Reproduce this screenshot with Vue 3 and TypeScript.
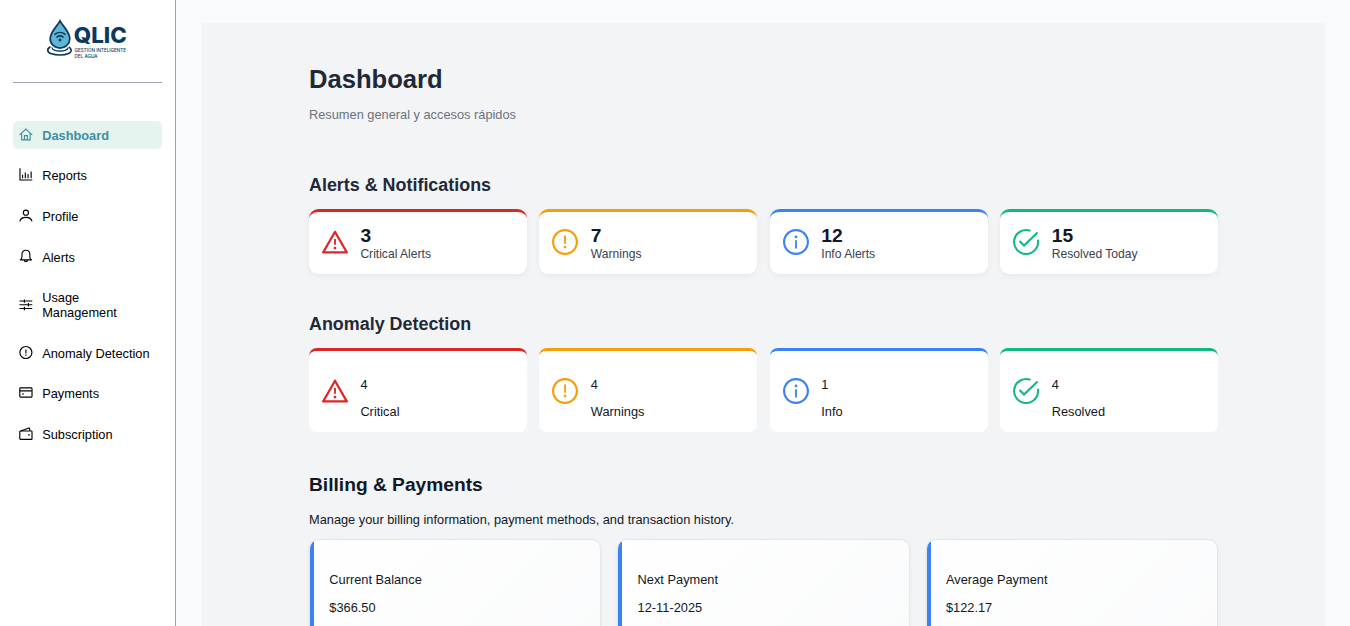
<script setup lang="ts">
interface NavItem {
  label: string
  icon: string
  active?: boolean
}

interface StatCard {
  tone: 'critical' | 'warning' | 'info' | 'resolved'
  value: number
  label: string
}

const navItems: NavItem[] = [
  { label: 'Dashboard', icon: 'home', active: true },
  { label: 'Reports', icon: 'chart' },
  { label: 'Profile', icon: 'user' },
  { label: 'Alerts', icon: 'bell' },
  { label: 'Usage Management', icon: 'sliders' },
  { label: 'Anomaly Detection', icon: 'exclamation' },
  { label: 'Payments', icon: 'card' },
  { label: 'Subscription', icon: 'wallet' },
]

const alerts: StatCard[] = [
  { tone: 'critical', value: 3, label: 'Critical Alerts' },
  { tone: 'warning', value: 7, label: 'Warnings' },
  { tone: 'info', value: 12, label: 'Info Alerts' },
  { tone: 'resolved', value: 15, label: 'Resolved Today' },
]

const anomalies: StatCard[] = [
  { tone: 'critical', value: 4, label: 'Critical' },
  { tone: 'warning', value: 4, label: 'Warnings' },
  { tone: 'info', value: 1, label: 'Info' },
  { tone: 'resolved', value: 4, label: 'Resolved' },
]

const sections = [
  { title: 'Alerts & Notifications', kind: 'alerts', cards: alerts },
  { title: 'Anomaly Detection', kind: 'anomalies', cards: anomalies },
]

const billing = [
  { label: 'Current Balance', value: '$366.50' },
  { label: 'Next Payment', value: '12-11-2025' },
  { label: 'Average Payment', value: '$122.17' },
]
</script>

<template>
  <div class="layout">
    <aside class="sidebar">
      <div class="brand">
        <svg class="logo" viewBox="0 0 84 44" width="84" height="44">
          <path d="M4.500 28.800C.4 31 1 34.300 5.500 35.800c5 1.700 12.500 1.600 17-.300 3.400-1.500 3.800-4.300.4-6.500" fill="none" stroke="#0b3a5e" stroke-width="1.700" />
          <path d="M6 29.300c-.3 2.400 3.600 3.700 8 3.700s8.300-1.200 8-3.500" fill="none" stroke="#0b3a5e" stroke-width="1.300" />
          <path d="M14 2.800C11.500 8 4.200 13.600 4.200 20.800a9.800 9.300 0 0 0 19.600 0C23.800 13.600 16.500 8 14 2.800z" fill="#5fb5d6" stroke="#0b3a5e" stroke-width="1.700" />
          <g fill="none" stroke="#0b3a5e" stroke-width="1.500" stroke-linecap="round">
            <path d="M8.900 16.300c3-2.500 7.200-2.500 10.200 0" />
            <path d="M10.900 19.100c1.900-1.500 4.300-1.500 6.200 0" />
          </g>
          <circle cx="14" cy="22" r="1.500" fill="#0b3a5e" />
          <text class="wordmark" x="27.800" y="25.200" textLength="53" lengthAdjust="spacingAndGlyphs">QLIC</text>
          <text class="tagline" x="28.500" y="33.800" textLength="51.500" lengthAdjust="spacingAndGlyphs">GESTIÓN INTELIGENTE</text>
          <text class="tagline" x="28.500" y="40.300" textLength="23" lengthAdjust="spacingAndGlyphs">DEL AGUA</text>
        </svg>
      </div>
      <nav class="nav">
        <a v-for="item in navItems" :key="item.label" class="nav-item" :class="{ active: item.active }">
          <svg class="nav-icon" viewBox="0 0 14 14">
            <template v-if="item.icon === 'home'">
              <path d="M.6 7L7 1.100l6.400 5.900M2.700 5.700v6.400h8.600V5.700M5.500 12.100V7.700h3v4.400" />
            </template>
            <template v-else-if="item.icon === 'chart'">
              <path d="M1 .3v11.900h12.500M3.600 6.900v3.600M6.400 4.500v6M9.200 6v4.500M12.300 3.500v7" />
            </template>
            <template v-else-if="item.icon === 'user'">
              <circle cx="7" cy="3.700" r="2.600" />
              <path d="M.8 12.500C1.400 9.800 4 8.500 7 8.500s5.600 1.300 6.200 4" />
            </template>
            <template v-else-if="item.icon === 'bell'">
              <path d="M.9 11h12.200M1.500 10.800c1-.7 1.500-1.500 1.500-2.700V5.600C3 3 4.600 1.300 7 1.300s4 1.700 4 4.300v2.500c0 1.200.5 2 1.500 2.700M5.200 11.400c.2 1 1 1.500 1.800 1.500s1.600-.5 1.800-1.500" />
            </template>
            <template v-else-if="item.icon === 'sliders'">
              <path d="M.5 3.100h13M.5 6.900h13M.5 10.700h13M5.500 1.400v3.300M9.500 5.200v3.400M5.500 9v3.400" />
            </template>
            <template v-else-if="item.icon === 'exclamation'">
              <circle cx="7" cy="6.600" r="6.100" />
              <path d="M7 3.500v4M7 8.600v1.200" />
            </template>
            <template v-else-if="item.icon === 'card'">
              <rect x=".8" y="1.900" width="12.400" height="9.400" rx=".8" />
              <path d="M1 4.900h12M3 8.100h2" />
            </template>
            <template v-else>
              <rect x=".8" y="4" width="12.400" height="8.600" rx=".8" />
              <path d="M1.500 4l8.800-3 1 2.800M9.300 8h1.600" />
            </template>
          </svg>
          <span>{{ item.label }}</span>
        </a>
      </nav>
    </aside>

    <main class="main">
      <div class="panel">
        <header class="page-header">
          <h1>Dashboard</h1>
          <p>Resumen general y accesos rápidos</p>
        </header>

        <section v-for="section in sections" :key="section.kind" :class="section.kind">
          <h2>{{ section.title }}</h2>
          <div class="stat-grid">
            <article v-for="card in section.cards" :key="card.tone" class="stat" :class="card.tone">
              <svg v-if="card.tone === 'resolved'" class="stat-icon" viewBox="0 0 26 26">
                <g fill="none" stroke="currentColor" stroke-width="2.100">
                  <path d="M17.600 1.900A12 12 0 1 0 24.900 10.800" />
                  <path d="M6.500 11.900l4.500 4.700L24.600 3.400" />
                </g>
              </svg>
              <svg v-else class="stat-icon" viewBox="64 64 896 896" fill="currentColor">
                <path v-if="card.tone === 'critical'" d="M464 720a48 48 0 1 0 96 0 48 48 0 1 0-96 0zm16-304v184c0 4.400 3.600 8 8 8h48c4.400 0 8-3.600 8-8V416c0-4.400-3.600-8-8-8h-48c-4.400 0-8 3.600-8 8zm475.700 440l-416-720c-6.200-10.700-16.900-16-27.700-16s-21.600 5.300-27.700 16l-416 720C56 877.400 71.400 904 96 904h832c24.600 0 40-26.600 27.700-48zm-783.500-27.900L512 239.900l339.800 588.200H172.200z" />
                <template v-else>
                  <path d="M512 64C264.600 64 64 264.600 64 512s200.600 448 448 448 448-200.600 448-448S759.400 64 512 64zm0 820c-205.400 0-372-166.600-372-372s166.600-372 372-372 372 166.600 372 372-166.600 372-372 372z" />
                  <path v-if="card.tone === 'info'" d="M464 336a48 48 0 1 0 96 0 48 48 0 1 0-96 0zm72 112h-48c-4.400 0-8 3.600-8 8v272c0 4.400 3.600 8 8 8h48c4.400 0 8-3.600 8-8V456c0-4.400-3.600-8-8-8z" />
                  <path v-else d="M464 688a48 48 0 1 0 96 0 48 48 0 1 0-96 0zm24-112h48c4.400 0 8-3.600 8-8V296c0-4.400-3.600-8-8-8h-48c-4.400 0-8 3.600-8 8v272c0 4.400 3.600 8 8 8z" />
                </template>
              </svg>
              <div class="stat-text">
                <div class="stat-value">{{ card.value }}</div>
                <div class="stat-label">{{ card.label }}</div>
              </div>
            </article>
          </div>
        </section>

        <section class="billing">
          <h2>Billing &amp; Payments</h2>
          <p class="intro">Manage your billing information, payment methods, and transaction history.</p>
          <div class="bill-grid">
            <article v-for="bill in billing" :key="bill.label" class="bill">
              <p>{{ bill.label }}</p>
              <p>{{ bill.value }}</p>
            </article>
          </div>
        </section>
      </div>
    </main>
  </div>
</template>

<style>
body {
  margin: 0;
  overflow: hidden;
}
</style>

<style scoped>
.layout {
  display: flex;
  height: 626px;
  overflow: hidden;
  background: #f8fafc;
  color: #111827;
  font: 12.8px/15px "Liberation Sans", Arial, sans-serif;
}
h1, h2, p {
  margin: 0;
}
.sidebar {
  box-sizing: border-box;
  flex: none;
  width: 176px;
  padding: 0 12.8px;
  border-right: 1px solid #9ca3af;
  background: #fff;
}
.brand {
  box-sizing: border-box;
  display: flex;
  justify-content: center;
  height: 83px;
  padding-top: 18px;
  border-bottom: 1px solid #9ca3af;
}
.logo {
  flex: none;
}
.wordmark {
  fill: #0b3a5e;
  font: 800 21.500px Inter, sans-serif;
}
.tagline {
  fill: #0b3a5e;
  font: 500 5px Inter, sans-serif;
}
.nav {
  display: flex;
  flex-direction: column;
  gap: 12.8px;
  padding-top: 38.4px;
}
.nav-item {
  display: flex;
  align-items: center;
  gap: 9.2px;
  padding: 6.4px;
  border-radius: 5px;
  color: #000;
}
.nav-item.active {
  background: #e6f4ef;
  color: #3f8ea5;
  font-weight: 700;
}
.nav-icon {
  flex: none;
  width: 13.8px;
  height: 13.8px;
  margin-top: -1.4px;
  overflow: visible;
  fill: none;
  stroke: currentColor;
  stroke-width: 1.15;
}
.main {
  flex: 1;
  padding: 23px 25px 0 25.6px;
}
.panel {
  box-sizing: border-box;
  height: 620px;
  padding: 42px 107px 0 107.4px;
  background: #f3f4f6;
}
h1 {
  color: #1f2937;
  font-size: 25.6px;
  line-height: 29px;
}
.page-header p {
  margin-top: 13px;
  color: #6b7280;
}
h2 {
  color: #1f2937;
  font-size: 17.92px;
  line-height: 21px;
}
.alerts {
  margin-top: 52.500px;
}
.anomalies {
  margin-top: 40px;
}
.stat-grid {
  display: grid;
  grid-template-columns: repeat(4, 1fr);
  gap: 12.8px;
  margin-top: 13.500px;
}
.anomalies .stat-grid {
  margin-top: 13px;
}
.stat {
  box-sizing: border-box;
  display: flex;
  align-items: center;
  gap: 12.6px;
  height: 65px;
  padding: 0 12.8px;
  border-top: 3px solid currentColor;
  border-radius: 9.6px;
  background: #fff;
}
.alerts .stat {
  box-shadow: 0 2px 6px rgba(0, 0, 0, 0.05);
}
.anomalies .stat {
  height: 84px;
  border-radius: 8px;
}
.critical { color: #dc2626; }
.warning { color: #f59e0b; }
.info { color: #3b82f6; }
.resolved { color: #10b981; }
.stat-icon {
  flex: none;
  width: 26px;
  height: 26px;
  margin-top: -3px;
  overflow: visible;
}
.anomalies .stat-icon {
  margin-top: -2px;
}
.stat-text {
  color: #111827;
}
.alerts .stat-value {
  font-size: 19.2px;
  font-weight: 700;
  line-height: 22px;
}
.alerts .stat-label {
  color: #374151;
  font-size: 12.1px;
  line-height: 14px;
}
.anomalies .stat-text {
  margin-top: 12px;
}
.anomalies .stat-label {
  margin-top: 12px;
}
.billing {
  margin-top: 42px;
}
.billing h2 {
  color: #111827;
  font-size: 19.2px;
  line-height: 22px;
}
.intro {
  margin-top: 16px;
}
.bill-grid {
  display: grid;
  grid-template-columns: repeat(3, 1fr);
  gap: 16px;
  margin-top: 12px;
}
.bill {
  position: relative;
  height: 120px;
  padding: 32px 19.3px 0;
  overflow: hidden;
  border: 1px solid #e5e7eb;
  border-radius: 9.6px;
  background: linear-gradient(135deg, #fff, #f9fafb);
  box-shadow: 0 1px 4px rgba(0, 0, 0, 0.05);
}
.bill::before {
  content: "";
  position: absolute;
  inset: 0 auto 0 0;
  width: 4px;
  background: #3b82f6;
}
.bill p + p {
  margin-top: 13px;
}
</style>
